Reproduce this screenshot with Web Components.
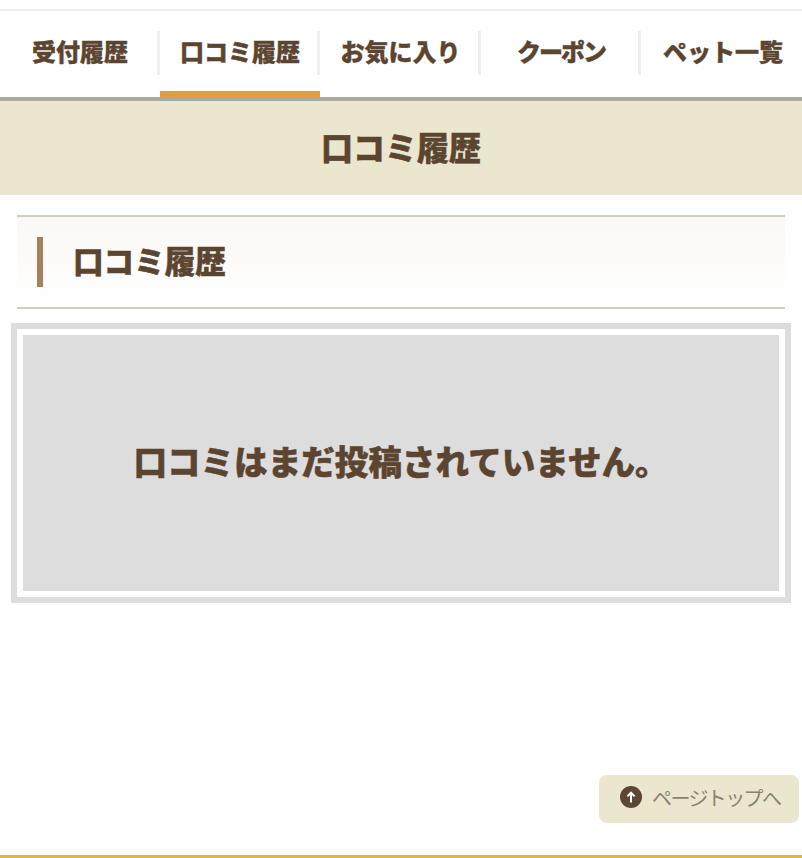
<!DOCTYPE html>
<html lang="ja">
<head>
<meta charset="utf-8">
<title>口コミ履歴</title>
<style>
html, body { margin: 0; padding: 0; background: #fff; }
body { font-family: "Noto Sans CJK JP", "Noto Sans", sans-serif; color: #5c4530; }
</style>
</head>
<body>
<app-page>
    <app-tabs slot="tabs">
        <app-tab>受付履歴</app-tab>
        <app-tab active>口コミ履歴</app-tab>
        <app-tab>お気に入り</app-tab>
        <app-tab tight>クーポン</app-tab>
        <app-tab last>ペット一覧</app-tab>
    </app-tabs>
    <app-band slot="band">口コミ履歴</app-band>
    <app-heading>口コミ履歴</app-heading>
    <app-empty>口コミはまだ投稿されていません。</app-empty>
    <app-pagetop slot="overlay">ページトップへ</app-pagetop>
</app-page>
<script>
"use strict"
{
    class AppPage extends HTMLElement {
        constructor() {
            super();
            this.attachShadow({ mode: 'open' }).innerHTML = `
<style>
:host { display: flex; flex-direction: column; position: relative; height: 858px; box-sizing: border-box; border-bottom: 3px solid #e0b544; overflow: hidden; }
main { display: flex; flex-direction: column; padding-top: 20px; }
</style>
<slot name="tabs"></slot>
<slot name="band"></slot>
<main><slot></slot></main>
<slot name="overlay"></slot>`;
        }
    }
    customElements.define('app-page', AppPage);

    class AppTabs extends HTMLElement {
        constructor() {
            super();
            this.attachShadow({ mode: 'open' }).innerHTML = `
<style>
:host { display: grid; grid-template-columns: 160px 160px 161px 160px 161px; height: 86px; margin-top: 9px; border-top: 2px solid #eeeeee; border-bottom: 4px solid #aaa9a0; }
</style>
<slot></slot>`;
        }
    }
    customElements.define('app-tabs', AppTabs);

    class AppTab extends HTMLElement {
        constructor() {
            super();
            this.attachShadow({ mode: 'open' }).innerHTML = `
<style>
:host { display: flex; align-items: flex-start; position: relative; height: 86px; font-size: 24px; font-weight: 900; color: #5c4530; }
:host([tight]) { letter-spacing: -2px; }
.label { flex: 1; height: 44px; margin-top: 20px; box-sizing: border-box; padding: 0 0 4px 3px; display: flex; align-items: center; justify-content: center; border-right: 3px solid #eeeeee; line-height: 1; white-space: nowrap; -webkit-text-stroke: 0.4px #5c4530; }
:host([last]) .label { border-right: 0; }
.bar { display: none; position: absolute; left: 0; right: 0; bottom: 0; height: 6px; background: #e89b3c; }
:host([active]) .bar { display: block; }
</style>
<div class="label"><slot></slot></div>
<div class="bar"></div>`;
        }
    }
    customElements.define('app-tab', AppTab);

    class AppBand extends HTMLElement {
        constructor() {
            super();
            this.attachShadow({ mode: 'open' }).innerHTML = `
<style>
:host { display: flex; align-items: center; justify-content: center; height: 94px; box-sizing: border-box; padding-bottom: 4px; background: #ebe7cf; font-size: 32px; font-weight: 900; line-height: 1; color: #5c4530; -webkit-text-stroke: 0.5px #5c4530; }
</style>
<slot></slot>`;
        }
    }
    customElements.define('app-band', AppBand);

    class AppHeading extends HTMLElement {
        constructor() {
            super();
            this.attachShadow({ mode: 'open' }).innerHTML = `
<style>
:host { display: block; margin: 0 17px; box-sizing: border-box; height: 94px; padding: 20px; border-top: 2px solid #d2cdbf; border-bottom: 2px solid #d2cdbf; background: linear-gradient(#faf8f4, #ffffff); }
h2 { margin: 0; height: 50px; box-sizing: border-box; display: flex; align-items: center; padding: 0 0 4px 30px; border-left: 6px solid #a5825c; font-size: 30.6px; font-weight: 900; line-height: 1; color: #5c4530; -webkit-text-stroke: 0.5px #5c4530; }
</style>
<h2><slot></slot></h2>`;
        }
    }
    customElements.define('app-heading', AppHeading);

    class AppEmpty extends HTMLElement {
        constructor() {
            super();
            this.attachShadow({ mode: 'open' }).innerHTML = `
<style>
:host { display: block; margin: 14px 11px 0; box-sizing: border-box; height: 280px; border: 6px solid #dddddd; padding: 6px; background: #fff; }
div { height: 100%; box-sizing: border-box; padding: 0 0 4px 0; display: flex; align-items: center; justify-content: center; background: #dddddd; font-size: 33.6px; font-weight: 900; line-height: 1; color: #5c4530; -webkit-text-stroke: 0.5px #5c4530; }
</style>
<div><slot></slot></div>`;
        }
    }
    customElements.define('app-empty', AppEmpty);

    class AppPagetop extends HTMLElement {
        constructor() {
            super();
            this.attachShadow({ mode: 'open' }).innerHTML = `
<style>
:host { display: flex; align-items: center; position: absolute; left: 599px; top: 775px; width: 200px; height: 48px; box-sizing: border-box; padding-left: 21px; gap: 10px; background: #ebe7cf; border-radius: 8px; font-size: 20px; color: #8a8270; white-space: nowrap; letter-spacing: -1.6px; }
svg { flex: none; width: 22px; height: 22px; margin-top: -4px; }
span { margin-top: -4px; }
</style>
<svg viewBox="0 0 22 22"><circle cx="11" cy="11" r="11" fill="#5c4733"/><path d="M11 16.5V7M7.4 10.4L11 6.6l3.6 3.8" fill="none" stroke="#fff" stroke-width="2"/></svg>
<span><slot></slot></span>`;
        }
    }
    customElements.define('app-pagetop', AppPagetop);
}
</script>
</body>
</html>
